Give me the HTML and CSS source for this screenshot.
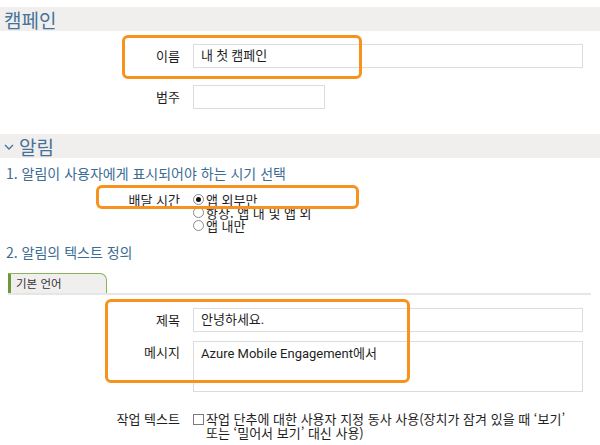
FILE: index.html
```html
<!DOCTYPE html>
<html lang="ko">
<head>
<meta charset="utf-8">
<link rel="stylesheet" href="styles.css">
</head>
<body>
<div class="page">
  <div class="section-head">캠페인</div>
  <div class="row row-name">
    <div class="label">이름</div>
    <div class="field">내 첫 캠페인</div>
  </div>
  <div class="row row-cat">
    <div class="label">범주</div>
    <div class="field short"></div>
  </div>

  <div class="section-head head2">
    <svg class="chev" width="10" height="6" viewBox="0 0 10 6"><path d="M1 1 L5 5 L9 1" fill="none" stroke="#46729a" stroke-width="1.3"/></svg>
    <span>알림</span>
  </div>
  <div class="step">1. 알림이 사용자에게 표시되어야 하는 시기 선택</div>
  <div class="row delivery">
    <div class="label">배달 시간</div>
    <div class="radio-list">
      <div class="opt"><span class="radio on"></span><span>앱 외부만</span></div>
      <div class="opt"><span class="radio"></span><span>항상. 앱 내 및 앱 외</span></div>
      <div class="opt"><span class="radio"></span><span>앱 내만</span></div>
    </div>
  </div>
  <div class="step step2">2. 알림의 텍스트 정의</div>
  <div class="tabs"><div class="tab">기본 언어</div></div>
  <div class="row row-title">
    <div class="label">제목</div>
    <div class="field">안녕하세요.</div>
  </div>
  <div class="row row-msg">
    <div class="label label-top">메시지</div>
    <div class="field area">Azure Mobile Engagement에서</div>
  </div>
  <div class="row row-action">
    <div class="label">작업 텍스트</div>
    <div class="check-opt">
      <span class="checkbox"></span>
      <span>작업 단추에 대한 사용자 지정 동사 사용(장치가 잠겨 있을 때 ‘보기’<br>또는 ‘밀어서 보기’ 대신 사용)</span>
    </div>
  </div>

  <div class="hl hl1"></div>
  <div class="hl hl2"></div>
  <div class="hl hl3"></div>
</div>
</body>
</html>
```

FILE: styles.css
```css
* { box-sizing: border-box; }
body {
  margin: 0;
  background: #fff;
  font-family: "Noto Sans CJK KR", "Noto Sans", sans-serif;
  font-size: 13px;
  color: #1e1e1e;
}
.page {
  position: relative;
  width: 600px;
  height: 445px;
  overflow: hidden;
  padding-top: 7px;
}
.section-head {
  height: 24px;
  background: #f0efed;
  color: #46729a;
  font-size: 19px;
  line-height: 24px;
  padding-left: 4px;
  padding-top: 1px;
  display: flex;
  align-items: center;
  gap: 5px;
}
.chev { margin-top: 1px; }
.head2 { margin-top: 25px; }
.row {
  display: grid;
  grid-template-columns: 180px 390px;
  column-gap: 13px;
}
.label {
  text-align: right;
  line-height: 24px;
}
.field {
  height: 24px;
  border: 1px solid #dcdcdc;
  padding: 0 7px;
  line-height: 22px;
  font-family: "Roboto", "Noto Sans CJK KR", sans-serif;
}
.field.short { width: 132px; }
.row-name { margin-top: 13px; }
.row-cat { margin-top: 17px; }
.step {
  margin-top: 7px;
  padding-left: 6px;
  color: #3b6c94;
  font-size: 14px;
  line-height: 16px;
}
.delivery {
  margin-top: 12px;
  line-height: 13px;
}
.delivery .label { line-height: 13px; }
.radio-list { display: flex; flex-direction: column; }
.opt {
  display: flex;
  align-items: center;
  gap: 2px;
  height: 13px;
}
.radio {
  width: 11px;
  height: 11px;
  border: 1px solid #8a8a8a;
  border-radius: 50%;
  display: grid;
  place-items: center;
  flex: none;
}
.radio.on::after {
  content: "";
  width: 5px;
  height: 5px;
  background: #111;
  border-radius: 50%;
}
.step2 { margin-top: 12px; }
.tabs {
  margin: 13px 9px 0 8px;
  height: 22px;
  border-bottom: 2px solid #e6e6e6;
}
.tab {
  width: 99px;
  height: 20px;
  background: #f0efed;
  border-left: 3px solid #6a9a35;
  border-top: 1px solid #8ab35a;
  border-right: 1px solid #8ab35a;
  border-top-right-radius: 7px;
  padding-left: 5px;
  font-size: 11.5px;
  line-height: 18px;
  color: #333;
}
.row-title { margin-top: 13px; }
.row-msg { margin-top: 9px; }
.field.area {
  height: 51px;
  padding-top: 1px;
}
.label-top { line-height: 22px; }
.row-action {
  margin-top: 20px;
  grid-template-columns: 180px 1fr;
  line-height: 14px;
}
.row-action .label { line-height: 14px; }
.check-opt {
  display: flex;
  align-items: flex-start;
  gap: 2px;
  white-space: nowrap;
}
.checkbox {
  width: 11px;
  height: 11px;
  border: 1px solid #7a7a7a;
  margin-top: 2px;
  flex: none;
}
.hl {
  position: absolute;
  border: 3px solid #f7921e;
  border-radius: 6px;
}
.hl1 { left: 122px; top: 35px; width: 240px; height: 44px; }
.hl2 { left: 96px; top: 185px; width: 263px; height: 24px; }
.hl3 { left: 105px; top: 299px; width: 305px; height: 84px; }
```
